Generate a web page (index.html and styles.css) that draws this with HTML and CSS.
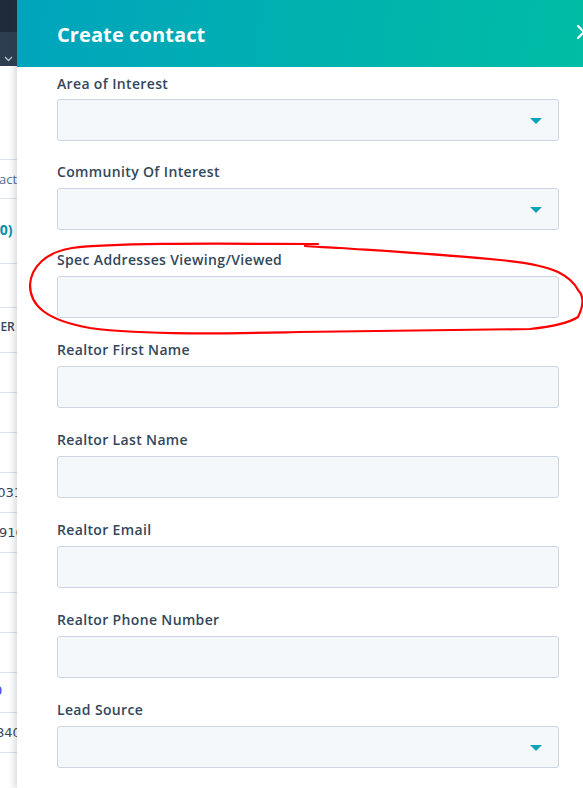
FILE: index.html
```html
<!DOCTYPE html>
<html lang="en">
<head>
<meta charset="utf-8">
<title>Create contact</title>
<link rel="stylesheet" href="styles.css">
</head>
<body>
<div class="page">
  <div class="bg">
    <div class="bar1"></div>
    <div class="bar2"><span class="chev"><svg width="9" height="6" viewBox="0 0 9 6"><path d="M1 1 L4.5 4.5 L8 1" fill="none" stroke="#b7c3d0" stroke-width="1.3"/></svg></span></div>
    <div class="row r-gap"></div>
    <div class="row r-38"><span class="t t-gray ind-ac">act</span></div>
    <div class="row r-64"><span class="t t-link ind-link">(0)</span></div>
    <div class="row r-43"></div>
    <div class="row r-44"><span class="t t-caps ind-er">NER</span></div>
    <div class="row r-40"></div>
    <div class="row r-40"></div>
    <div class="row r-40"></div>
    <div class="row r-40"><span class="t t-dark ind-031">5031</span></div>
    <div class="row r-40"><span class="t t-dark ind-916">916</span></div>
    <div class="row r-40"></div>
    <div class="row r-40"></div>
    <div class="row r-40"></div>
    <div class="row r-40"><span class="t t-blue ind-0">0</span></div>
    <div class="row r-40"><span class="t t-dark ind-840">840</span></div>
    <div class="row-rest"></div>
  </div>
  <div class="panel">
    <div class="header">
      <h1 class="title">Create contact</h1>
      <span class="close"><svg width="16" height="16" viewBox="0 0 16 16"><path d="M2 2 L14 14 M14 2 L2 14" stroke="#fff" stroke-width="2.2" stroke-linecap="round"/></svg></span>
    </div>
    <div class="form">
      <div class="field field-first">
        <label class="label">Area of Interest</label>
        <div class="input select"><span class="caret"></span></div>
      </div>
      <div class="field field-tight">
        <label class="label">Community Of Interest</label>
        <div class="input select"><span class="caret"></span></div>
      </div>
      <div class="field">
        <label class="label">Spec Addresses Viewing/Viewed</label>
        <div class="input"></div>
      </div>
      <div class="field">
        <label class="label">Realtor First Name</label>
        <div class="input"></div>
      </div>
      <div class="field">
        <label class="label">Realtor Last Name</label>
        <div class="input"></div>
      </div>
      <div class="field">
        <label class="label">Realtor Email</label>
        <div class="input"></div>
      </div>
      <div class="field">
        <label class="label">Realtor Phone Number</label>
        <div class="input"></div>
      </div>
      <div class="field">
        <label class="label">Lead Source</label>
        <div class="input select"><span class="caret"></span></div>
      </div>
    </div>
  </div>
  <svg class="annot" width="583" height="788" viewBox="0 0 583 788">
    <path d="M318 244 C250 244 120 242 72 248 C46 252 31 267 30 285 C30 305 45 320 90 328 C150 336 250 333 300 332 L530 329 C560 326 572 321 578 317 C584 305 584 296 578 290 C574 282 568 277 558 272 C545 266 522 262 500 260 C450 255 400 252 340 248 C325 247 312 247 305 246" fill="none" stroke="#ff0000" stroke-width="2.2" stroke-linecap="round" stroke-linejoin="round"/>
  </svg>
</div>
</body>
</html>
```
FILE: styles.css
```css
html, body {
  margin: 0;
  padding: 0;
  overflow: hidden;
  background: #ffffff;
}
.page {
  position: relative;
  display: flex;
  width: 583px;
  height: 788px;
  overflow: hidden;
  font-family: "Open Sans", "Liberation Sans", sans-serif;
}
.bg {
  width: 17px;
  flex: 0 0 17px;
  display: flex;
  flex-direction: column;
  overflow: hidden;
  background: #ffffff;
}
.bar1 { height: 32px; flex: 0 0 32px; background: #1f2b3a; }
.bar2 {
  height: 34px; flex: 0 0 34px; background: #2d3e50;
  display: flex; align-items: flex-end; padding-bottom: 4px; box-sizing: border-box;
}
.chev { display: block; margin-left: 4px; line-height: 0; }
.row {
  border-bottom: 1px solid #dfe3eb;
  box-sizing: border-box;
  display: flex;
  align-items: center;
  white-space: nowrap;
}
.r-gap { flex: 0 0 94px; }
.r-38 { flex: 0 0 39px; }
.r-64 { flex: 0 0 65px; }
.r-43 { flex: 0 0 44px; }
.r-44 { flex: 0 0 45px; }
.r-40 { flex: 0 0 40px; }
.row-rest { flex: 1; }
.t { display: block; font-size: 14px; line-height: 18px; }
.t-gray { color: #516f90; font-size: 13px; }
.t-link { color: #0091ae; font-weight: 700; }
.t-caps { color: #33475b; font-size: 12px; font-weight: 600; }
.t-dark { color: #33475b; font-family: "DejaVu Sans", sans-serif; font-size: 13px; }
.t-blue { color: #5c4de5; font-size: 12px; font-weight: 700; }
.ind-ac { margin-left: -1px; }
.ind-link { margin-left: -5px; margin-top: -3px; }
.ind-er { margin-left: -9px; margin-top: -6px; }
.ind-031 { margin-left: -11px; }
.ind-916 { margin-left: -1px; }
.ind-0 { margin-left: -5px; margin-top: -4px; }
.ind-840 { margin-left: -4px; }

.panel {
  flex: 0 0 566px;
  width: 566px;
  background: #ffffff;
  box-shadow: -3px 0 6px rgba(45, 62, 80, 0.18);
  position: relative;
  z-index: 1;
}
.header {
  height: 67px;
  display: flex;
  align-items: center;
  padding-left: 40px;
  background: linear-gradient(100deg, #00a4bd 0%, #00b3ad 60%, #00bda5 100%);
  overflow: hidden;
}
.title {
  margin: 0;
  padding-top: 2px;
  color: #ffffff;
  font-size: 20px;
  font-weight: 700;
  letter-spacing: 0.1px;
  line-height: 24px;
}
.close {
  margin-left: auto;
  margin-right: -9px;
  line-height: 0;
  margin-top: -4px;
}
.form {
  padding: 7px 24px 0 40px;
}
.field {
  margin-bottom: 22px;
}
.field-tight {
  margin-bottom: 20px;
}
.field-first {
  margin-bottom: 21px;
}
.field-first .label {
  margin-bottom: 5px;
}
.label {
  display: block;
  color: #33475b;
  font-size: 14px;
  font-weight: 600;
  letter-spacing: 0.35px;
  line-height: 20px;
  margin-bottom: 6px;
}
.input {
  height: 42px;
  box-sizing: border-box;
  background: #f5f8fa;
  border: 1px solid #cbd6e2;
  border-radius: 3px;
  display: flex;
  align-items: center;
  justify-content: flex-end;
  padding-right: 16px;
}
.caret {
  width: 0;
  height: 0;
  border-left: 6px solid transparent;
  border-right: 6px solid transparent;
  border-top: 6px solid #0fa3ba;
  margin-top: 2px;
}
.annot {
  position: absolute;
  left: 0;
  top: 0;
  z-index: 5;
  pointer-events: none;
}
```
